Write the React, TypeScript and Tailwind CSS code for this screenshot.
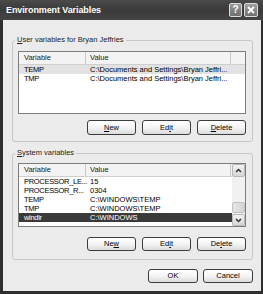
import React from "react";

const font = { fontFamily: '"Liberation Sans", Arial, sans-serif' };

function Btn({ children, w = "w-[49px]", h = "h-[15px]" }: { children: React.ReactNode; w?: string; h?: string }) {
  return (
    <div
      className={`${w} ${h} flex items-center justify-center rounded-[3px] border border-[#3c3c3c] bg-gradient-to-b from-[#ffffff] via-[#f4f4f4] to-[#dcdcdc] text-[7.5px] text-black leading-none`}
    >
      {children}
    </div>
  );
}

function U({ children }: { children: React.ReactNode }) {
  return <span className="underline underline-offset-1">{children}</span>;
}

function Header() {
  return (
    <div className="flex h-[13px] border-b border-[#cfcfcf] bg-[#f3f3f3] text-[7.5px] text-[#222] leading-[12px]">
      <div className="w-[67px] border-r border-[#c8c8c8] pl-[5px]">Variable</div>
      <div className="w-[145px] border-r border-[#c8c8c8] pl-[4px]">Value</div>
      <div className="flex-1" />
    </div>
  );
}

function Row({ name, value, sel }: { name: string; value: string; sel?: "light" | "dark" }) {
  const bg = sel === "light" ? "bg-[#e2e2e2]" : sel === "dark" ? "bg-[#3a3a3a] text-white" : "text-black";
  return (
    <div className={`flex h-[9px] text-[7.5px] leading-[9px] whitespace-nowrap ${bg}`}>
      <div className="w-[67px] pl-[5px] tracking-[-0.3px]">{name}</div>
      <div className="w-[145px] pl-[4px] overflow-hidden">{value}</div>
    </div>
  );
}

export default function App() {
  return (
    <div style={font} className="w-[263px] h-[294px] flex flex-col bg-[#2f2f2f] overflow-hidden">
      {/* title bar */}
      <div className="h-[20px] flex items-center pl-[6px] pr-[5px] bg-gradient-to-b from-[#4a4a4a] via-[#3a3a3a] to-[#444444]">
        <div className="flex-1 text-white font-bold text-[9px] tracking-[-0.1px] leading-none">Environment Variables</div>
        <div className="flex gap-[2px] items-center">
          <div className="w-[13px] h-[14px] rounded-[2px] border border-[#dcdcdc] bg-gradient-to-b from-[#9a9a9a] to-[#6e6e6e] flex items-center justify-center text-white font-bold text-[10px] leading-none">?</div>
          <div className="w-[14px] h-[14px] rounded-[2px] border border-[#dcdcdc] bg-gradient-to-b from-[#a0a0a0] to-[#707070] flex items-center justify-center">
            <svg width="8" height="8" viewBox="0 0 8 8">
              <path d="M1 1 L7 7 M7 1 L1 7" stroke="white" strokeWidth="1.8" />
            </svg>
          </div>
        </div>
      </div>
      {/* body */}
      <div className="flex-1 ml-[3px] mr-[2px] mb-[3px] bg-[#ebebeb] pl-[9px] pt-[20px] flex flex-col">
        {/* user group */}
        <div className="relative w-[241px] h-[102px] border border-[#c6c6c6] rounded-[3px] flex flex-col">
          <div className="absolute left-[2px] top-[-6px] px-[2px] bg-[#ebebeb] text-[7.5px] leading-[10px] text-[#222]">
            <U>U</U>ser variables for Bryan Jeffries
          </div>
          <div className="ml-[5px] mt-[10px] w-[228px] h-[63px] border border-[#7c7c7c] bg-white flex flex-col">
            <Header />
            <Row name="TEMP" value="C:\Documents and Settings\Bryan Jeffri..." sel="light" />
            <Row name="TMP" value="C:\Documents and Settings\Bryan Jeffri..." />
          </div>
          <div className="mt-[6px] flex justify-end gap-[6px] pr-[6px]">
            <Btn><U>N</U>ew</Btn>
            <Btn>Ed<U>i</U>t</Btn>
            <Btn><U>D</U>elete</Btn>
          </div>
        </div>
        {/* system group */}
        <div className="relative mt-[11px] w-[241px] h-[107px] border border-[#c6c6c6] rounded-[3px] flex flex-col">
          <div className="absolute left-[2px] top-[-6px] px-[2px] bg-[#ebebeb] text-[7.5px] leading-[10px] text-[#222]">
            <U>S</U>ystem variables
          </div>
          <div className="ml-[5px] mt-[9px] w-[228px] h-[64px] border border-[#7c7c7c] bg-white flex">
            <div className="flex-1 flex flex-col">
              <Header />
              <Row name="PROCESSOR_LE..." value="15" />
              <Row name="PROCESSOR_R..." value="0304" />
              <Row name="TEMP" value="C:\WINDOWS\TEMP" />
              <Row name="TMP" value="C:\WINDOWS\TEMP" />
              <Row name="windir" value="C:\WINDOWS" sel="dark" />
            </div>
            <div className="w-[13px] flex flex-col bg-[#f1f1f1]">
              <div className="h-[13px] rounded-[2px] border border-[#b8b8b8] bg-gradient-to-b from-[#f4f4f4] to-[#d6d6d6] flex items-center justify-center">
                <svg width="7" height="5" viewBox="0 0 7 5">
                  <path d="M1 4 L3.5 1.5 L6 4" stroke="#333" strokeWidth="1.5" fill="none" />
                </svg>
              </div>
              <div className="flex-1 flex flex-col justify-end pb-[1px]">
                <div className="h-[11px] rounded-[2px] border border-[#c0c0c0] bg-gradient-to-r from-[#e6e6e6] to-[#d4d4d4]" />
              </div>
              <div className="h-[12px] rounded-[2px] border border-[#b8b8b8] bg-gradient-to-b from-[#f4f4f4] to-[#d6d6d6] flex items-center justify-center">
                <svg width="7" height="5" viewBox="0 0 7 5">
                  <path d="M1 1 L3.5 3.5 L6 1" stroke="#333" strokeWidth="1.5" fill="none" />
                </svg>
              </div>
            </div>
          </div>
          <div className="mt-[10px] flex justify-end gap-[6px] pr-[6px]">
            <Btn h="h-[14px]">Ne<U>w</U></Btn>
            <Btn h="h-[14px]">Ed<U>i</U>t</Btn>
            <Btn h="h-[14px]">De<U>l</U>ete</Btn>
          </div>
        </div>
        <div className="mt-[9px] w-[241px] flex justify-end gap-[5px]">
          <Btn w="w-[50px]" h="h-[14px]">OK</Btn>
          <Btn w="w-[50px]" h="h-[14px]">Cancel</Btn>
        </div>
      </div>
    </div>
  );
}
